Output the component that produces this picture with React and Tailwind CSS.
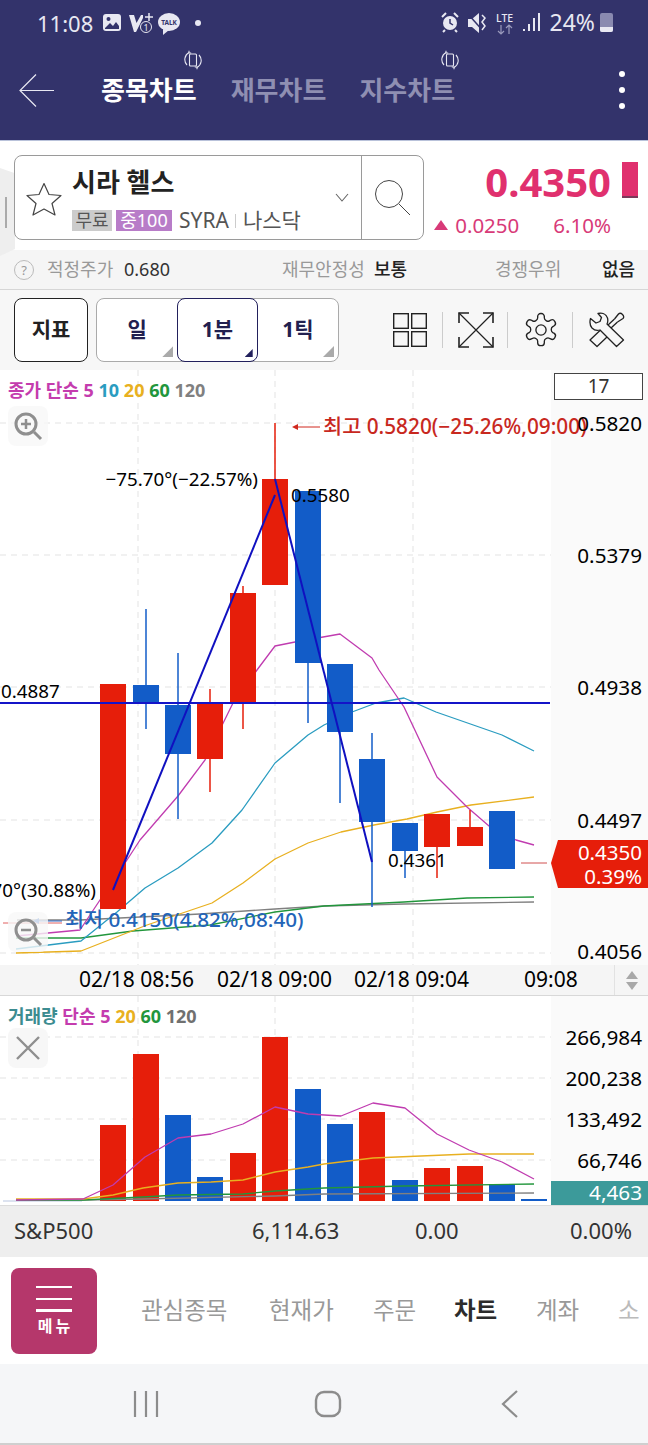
import React from 'react';

const BLUE = '#125cc8';
const RED = '#e61e0a';

// x = left edge, top/bottom = body, hi/lo = wick
const candles = [
  { x: 100, top: 684, bottom: 909, color: RED },
  { x: 133, top: 685, bottom: 702, hi: 609, lo: 729, color: BLUE },
  { x: 165, top: 705, bottom: 754, hi: 653, lo: 819, color: BLUE },
  { x: 197, top: 703, bottom: 759, hi: 689, lo: 792, color: RED },
  { x: 230, top: 593, bottom: 702, hi: 586, lo: 729, color: RED },
  { x: 262, top: 479, bottom: 585, hi: 423, lo: 479, color: RED },
  { x: 295, top: 491, bottom: 663, hi: 491, lo: 723, color: BLUE },
  { x: 327, top: 664, bottom: 732, hi: 664, lo: 803, color: BLUE },
  { x: 359, top: 759, bottom: 822, hi: 733, lo: 907, color: BLUE },
  { x: 392, top: 823, bottom: 851, hi: 823, lo: 878, color: BLUE },
  { x: 424, top: 814, bottom: 847, hi: 814, lo: 878, color: RED },
  { x: 457, top: 827, bottom: 846, hi: 810, lo: 846, color: RED },
  { x: 489, top: 811, bottom: 869, hi: 811, lo: 869, color: BLUE },
];

const volumes = [
  { x: 100, top: 1125, color: RED },
  { x: 133, top: 1054, color: RED },
  { x: 165, top: 1115, color: BLUE },
  { x: 197, top: 1177, color: BLUE },
  { x: 230, top: 1153, color: RED },
  { x: 262, top: 1037, color: RED },
  { x: 295, top: 1089, color: BLUE },
  { x: 327, top: 1124, color: BLUE },
  { x: 359, top: 1112, color: RED },
  { x: 392, top: 1180, color: BLUE },
  { x: 424, top: 1168, color: RED },
  { x: 457, top: 1166, color: RED },
  { x: 489, top: 1184, color: BLUE },
  { x: 521, top: 1199, color: BLUE },
];

const priceLines = [
  { color: '#808080', points: '17,920 80,920 200,914 275,909 324,906 404,904 534,902' },
  { color: '#22963c', points: '16,938 81,938 133,931 210,925 275,912 324,906 404,902 467,898 534,897' },
  { color: '#e8b020', points: '16,953 81,951 147,925 212,903 243,883 275,859 308,843 341,832 374,825 407,819 437,812 471,805 534,797' },
  { color: '#2a9cc0', points: '16,949 81,941 117,912 145,888 178,868 212,843 242,810 275,763 308,735 324,725 352,712 376,703 404,698 436,712 502,735 534,751' },
  { color: '#c03cb0', points: '16,936 80,930 100,900 127,860 140,840 178,796 205,760 233,703 257,670 275,646 295,642 340,634 372,658 379,670 404,707 437,777 467,807 489,826 516,840 534,845' },
];

const volumeLines = [
  { color: '#808080', points: '16,1200 83,1200 143,1199 275,1196 324,1194 534,1193' },
  { color: '#22963c', points: '16,1200 83,1200 143,1197 178,1195 243,1194 275,1191 324,1188 404,1186 534,1184' },
  { color: '#e8b020', points: '16,1199 83,1199 113,1195 143,1188 178,1183 211,1182 243,1180 275,1172 308,1167 324,1164 373,1158 469,1154 534,1154' },
  { color: '#c03cb0', points: '16,1200 83,1199 113,1185 145,1157 178,1138 211,1134 243,1124 275,1107 308,1114 341,1116 373,1103 405,1108 437,1134 469,1150 502,1162 534,1179' },
];

const StatusIcons = () => (
  <svg width="150" height="28" viewBox="0 0 150 28" fill="none" className="ml-[9px]">
    {/* gallery */}
    <rect x="1" y="5" width="18" height="17" rx="3" fill="#e8e8f2" />
    <circle cx="6.5" cy="10" r="2" fill="#33336b" />
    <path d="M3 19 L8 14 L11 17 L14 13 L17 17 V20 H3 Z" fill="#33336b" />
    {/* vibrate off with count */}
    <path d="M27 6 H32 L34.5 14 L39 6 H41 V9 L34 23 H32 Z" fill="#e8e8f2" />
    <path d="M47 4 V12 M43 8 H51" stroke="#e8e8f2" strokeWidth="1.5" />
    <circle cx="44" cy="18" r="5.5" fill="#33336b" stroke="#e8e8f2" strokeWidth="1" />
    <text x="44" y="21.5" textAnchor="middle" fontSize="9" fill="#e8e8f2">1</text>
    {/* talk bubble */}
    <ellipse cx="67" cy="13" rx="11" ry="9" fill="#e8e8f2" />
    <path d="M61 20 L61 26 L67 21 Z" fill="#e8e8f2" />
    <text x="67" y="15.5" textAnchor="middle" fontSize="6.5" fontWeight="700" fill="#33336b">TALK</text>
    <circle cx="96" cy="14" r="3" fill="#e8e8f2" />
  </svg>
);

const StatusRight = () => (
  <svg width="101" height="28" viewBox="0 0 101 28" fill="none">
    {/* alarm */}
    <circle cx="9" cy="14" r="7" fill="#e8e8f2" />
    <path d="M9 10 V14 L12 16" stroke="#33336b" strokeWidth="1.5" />
    <path d="M1 8 L5 4 M17 8 L13 4 M4 21 L2 23 M14 21 L16 23" stroke="#e8e8f2" strokeWidth="2" />
    {/* mute */}
    <path d="M27 10 H31 L38 4 V24 L31 18 H27 Z" fill="#e8e8f2" />
    <path d="M27 5 L43 23" stroke="#33336b" strokeWidth="1.5" />
    <path d="M41 6 L44 9 L41 13 L44 17 L41 21" stroke="#e8e8f2" strokeWidth="1.5" />
    {/* lte */}
    <text x="55" y="13" fontSize="10.5" fontWeight="500" fill="#e8e8f2">LTE</text>
    <path d="M60 16 V25 M57 22 L60 25 L63 22" stroke="#9a9abc" strokeWidth="1.2" />
    <path d="M68 16 V25 M65 19 L68 16 L71 19" stroke="#9a9abc" strokeWidth="1.2" />
    {/* signal */}
    <path d="M83 22 V20 M88 22 V15 M93 22 V9 M98 22 V4" stroke="#e8e8f2" strokeWidth="2" />
  </svg>
);

const RotateIcon = () => (
  <svg width="18" height="20" viewBox="0 0 18 20" fill="none" stroke="#e8e8f2" strokeWidth="1.1">
    <rect x="5.5" y="4" width="7" height="12" rx="1" />
    <path d="M3 15 A8 8 0 0 1 5 2.5 M15 5 A8 8 0 0 1 13 17.5" />
    <path d="M5 0.8 V3 H7.2 M13 19.2 V17 H10.8" />
  </svg>
);

const CornerMark = ({ className = 'w-[11px] h-[11px] bg-[#aaaaaa]' }) => (
  <span className={`absolute right-[4px] bottom-[4px] [clip-path:polygon(100%_0,100%_100%,0_100%)] ${className}`} />
);

const ToolIcons = () => (
  <div className="flex items-center ml-[54px]">
    <svg width="34" height="34" viewBox="0 0 34 34" fill="none" stroke="#222" strokeWidth="1.4">
      <rect x="0.7" y="0.7" width="14.6" height="14.6" />
      <rect x="18.7" y="0.7" width="14.6" height="14.6" />
      <rect x="0.7" y="18.7" width="14.6" height="14.6" />
      <rect x="18.7" y="18.7" width="14.6" height="14.6" />
    </svg>
    <span className="w-px h-[36px] bg-[#cccccc] ml-[15px] mr-[15px]" />
    <svg width="36" height="36" viewBox="0 0 36 36" fill="none" stroke="#222" strokeWidth="1.2">
      <path d="M1 1 L35 35 M35 1 L1 35" />
      <path d="M1 11 V1 H11 M25 1 H35 V11 M35 25 V35 H25 M11 35 H1 V25" strokeWidth="1.6" />
    </svg>
    <span className="w-px h-[36px] bg-[#cccccc] ml-[13px] mr-[15px]" />
    <svg width="36" height="36" viewBox="0 0 24 24" fill="none" stroke="#222" strokeWidth="0.9" strokeLinejoin="round">
      <path d="M12.22 1h-.44a2 2 0 0 0-2 2v.9a2 2 0 0 1-1 1.73l-.43.25a2 2 0 0 1-2 0l-.75-.4a2 2 0 0 0-2.73.73l-.22.38a2 2 0 0 0 .73 2.73l.75.42a2 2 0 0 1 1 1.72v.51a2 2 0 0 1-1 1.74l-.75.42a2 2 0 0 0-.73 2.73l.22.38a2 2 0 0 0 2.73.73l.75-.4a2 2 0 0 1 2 0l.43.25a2 2 0 0 1 1 1.73v.9a2 2 0 0 0 2 2h.44a2 2 0 0 0 2-2v-.9a2 2 0 0 1 1-1.73l.43-.25a2 2 0 0 1 2 0l.75.4a2 2 0 0 0 2.73-.73l.22-.39a2 2 0 0 0-.73-2.73l-.75-.41a2 2 0 0 1-1-1.74v-.5a2 2 0 0 1 1-1.74l.75-.42a2 2 0 0 0 .73-2.73l-.22-.38a2 2 0 0 0-2.73-.73l-.75.4a2 2 0 0 1-2 0l-.43-.25a2 2 0 0 1-1-1.73V3a2 2 0 0 0-2-2z" />
      <circle cx="12" cy="12" r="3.4" />
    </svg>
    <span className="w-px h-[36px] bg-[#cccccc] ml-[13px] mr-[16px]" />
    <svg width="36" height="36" viewBox="0 0 36 36" fill="none" stroke="#222" strokeWidth="1.3" strokeLinejoin="round">
      {/* wrench */}
      <path d="M9 1.5 C13 0.5 17 2 18.5 6 C19 8 19 10 18 12 L34.5 28 L27.5 34.5 L11 18 C8 19 5 18 3 16 C1 13.5 0.5 10 1.5 6.5 L7 11 L11 9.5 L12.5 5.5 Z" />
      {/* screwdriver */}
      <path d="M11 18.5 L1 28 L8 34.5 L18 25" />
      <path d="M19 13 L25.5 7 M22 16 L28.5 10" />
      <path d="M25.5 7 L29.5 2 C30.5 1 32 1 33.5 2.5 C35 4 35 5.5 34 6.5 L28.5 10" />
    </svg>
  </div>
);

const ZoomButton = ({ plus, className }) => (
  <div className={`absolute left-[8px] w-[40px] h-[40px] rounded-lg bg-[#f7f7f7]/80 flex items-center justify-center ${className}`}>
    <svg width="30" height="30" viewBox="0 0 30 30" fill="none" stroke="#8f8f8f" strokeWidth="3">
      <circle cx="13" cy="13" r="10" />
      <path d="M21 21 L28 28" />
      <path d="M8 13 H18" strokeWidth="2.5" />
      {plus && <path d="M13 8 V18" strokeWidth="2.5" />}
    </svg>
  </div>
);

const PriceChart = () => (
  <div className="relative h-[595px] flex overflow-hidden bg-white">
    <div className="flex-1" />
    <div className="w-[97px] bg-[#fafafa]" />
    <svg className="absolute inset-0" width="648" height="595" viewBox="0 370 648 595" fill="none">
      {[423, 555, 687, 820, 953].map(y => (
        <path key={y} d={`M0 ${y} H551`} stroke="#e3e3e3" strokeDasharray="6 5" />
      ))}
      {[138, 275, 413].map(x => (
        <path key={x} d={`M${x} 370 V965`} stroke="#e3e3e3" strokeDasharray="6 5" />
      ))}
      {priceLines.map(l => (
        <polyline key={l.color} points={l.points} stroke={l.color} strokeWidth="1.3" strokeLinejoin="round" />
      ))}
      {candles.map(c => (
        <g key={c.x}>
          {c.hi && <path d={`M${c.x + 13} ${c.hi} V${c.lo}`} stroke={c.color} strokeWidth="1.5" />}
          <rect x={c.x} y={c.top} width="26" height={c.bottom - c.top} fill={c.color} />
        </g>
      ))}
      <path d="M521 863 H547" stroke="#d05050" />
      <path d="M0 703 H550" stroke="#1414c8" strokeWidth="2" />
      <path d="M113 890 L275 495" stroke="#1010c0" strokeWidth="2" />
      <path d="M275 479 L372 862" stroke="#1010c0" strokeWidth="2" />

      {/* low / high markers */}
      <path d="M3 923 H62" stroke="#e06060" />
      <path d="M38 921 H62" stroke="#2c66c4" />
      <path d="M33 921 L39 918 V924 Z" fill="#2c66c4" />
      <path d="M298 427 H320" stroke="#d0281e" />
      <path d="M292 427 L298 424 V430 Z" fill="#d0281e" />

      <text x="323" y="434" fontSize="20.8" fontWeight="500" fill="#c8281e">최고 0.5820(−25.26%,09:00)</text>
      <text x="65" y="927" fontSize="20.7" fontWeight="500" fill="#2264b8">최저 0.4150(4.82%,08:40)</text>
      <g fontSize="18.8" fill="#000">
        <text x="258" y="486" textAnchor="end">−75.70°(−22.57%)</text>
        <text x="291" y="502">0.5580</text>
        <text x="96" y="897" textAnchor="end">70°(30.88%)</text>
        <text x="1" y="698">0.4887</text>
        <text x="388" y="867">0.4361</text>
      </g>
      <g fontSize="20.7" fill="#000" textAnchor="end">
        <text x="642" y="431">0.5820</text>
        <text x="642" y="563">0.5379</text>
        <text x="642" y="695">0.4938</text>
        <text x="642" y="828">0.4497</text>
        <text x="642" y="959">0.4056</text>
      </g>
    </svg>
    <div className="absolute left-[551px] top-[470px] w-[97px] h-[48px] bg-[#e61e0a] [clip-path:polygon(7px_0,100%_0,100%_100%,7px_100%,0_48%)] flex flex-col items-end justify-center pr-[6px] text-[20.5px] leading-[24px] text-white">
      <span>0.4350</span>
      <span>0.39%</span>
    </div>
    <div className="absolute left-[8px] top-[10px] text-[18px] leading-5 font-bold whitespace-nowrap text-[#c43cae]">
      종가 단순 5 <span className="text-[#2a9cc0]">10</span> <span className="text-[#e8b020]">20</span>{' '}
      <span className="text-[#22963c]">60</span> <span className="text-[#808080]">120</span>
    </div>
    <div className="absolute left-[554px] top-[3px] w-[89px] h-[27px] border border-[#444] bg-white text-[19px] leading-[25px] text-center text-[#333]">
      17
    </div>
    <ZoomButton plus className="top-[36px]" />
    <ZoomButton className="top-[542px]" />
  </div>
);

const TimeAxis = () => (
  <div className="relative h-[31px] flex items-center bg-[#f5f5f5] border-b border-[#d8d8d8] text-[21px] text-black whitespace-nowrap">
    <span className="ml-[79px] w-[138px]">02/18 08:56</span>
    <span className="w-[137px]">02/18 09:00</span>
    <span className="w-[170px]">02/18 09:04</span>
    <span>09:08</span>
    <div className="absolute right-0 top-0 bottom-0 w-[34px] border-l border-[#e2e2e2] flex flex-col items-center justify-center gap-[3px]">
      <span className="w-0 h-0 border-x-[6px] border-x-transparent border-b-[8px] border-b-[#a8a8a8]" />
      <span className="w-0 h-0 border-x-[6px] border-x-transparent border-t-[8px] border-t-[#a8a8a8]" />
    </div>
  </div>
);

const VolumeChart = () => (
  <div className="relative h-[209px] flex overflow-hidden bg-white">
    <div className="flex-1" />
    <div className="w-[97px] bg-[#fafafa]" />
    <svg className="absolute inset-0" width="648" height="209" viewBox="0 996 648 209" fill="none">
      {[1037, 1078, 1119, 1160].map(y => (
        <path key={y} d={`M0 ${y} H551`} stroke="#e3e3e3" strokeDasharray="6 5" />
      ))}
      {[138, 275, 413].map(x => (
        <path key={x} d={`M${x} 996 V1205`} stroke="#e3e3e3" strokeDasharray="6 5" />
      ))}
      {volumes.map(v => (
        <rect key={v.x} x={v.x} y={v.top} width="26" height={1201 - v.top} fill={v.color} />
      ))}
      <path d="M3 1201 H82" stroke="#b9c6e0" />
      {volumeLines.map(l => (
        <polyline key={l.color} points={l.points} stroke={l.color} strokeWidth="1.3" strokeLinejoin="round" />
      ))}
      <g fontSize="20.7" fill="#000" textAnchor="end">
        <text x="642" y="1045">266,984</text>
        <text x="642" y="1086">200,238</text>
        <text x="642" y="1127">133,492</text>
        <text x="642" y="1168">66,746</text>
      </g>
      <rect x="551" y="1181" width="97" height="24" fill="#3c9a9a" />
      <text x="642" y="1200" fontSize="20.7" fill="#fff" textAnchor="end">4,463</text>
    </svg>
    <div className="absolute left-[8px] top-[10px] text-[18px] leading-5 font-bold whitespace-nowrap text-[#c43cae]">
      <span className="text-[#3c8c90]">거래량</span> 단순 5 <span className="text-[#e8b020]">20</span>{' '}
      <span className="text-[#22963c]">60</span> <span className="text-[#707070]">120</span>
    </div>
    <div className="absolute left-[8px] top-[32px] w-[40px] h-[40px] rounded-lg bg-[#f7f7f7] flex items-center justify-center">
      <svg width="26" height="26" viewBox="0 0 26 26" stroke="#8f8f8f" strokeWidth="2.4">
        <path d="M2 2 L24 24 M24 2 L2 24" />
      </svg>
    </div>
  </div>
);

const navItems = [
  { label: '관심종목', width: 'w-[128px]' },
  { label: '현재가', width: 'w-[104px]' },
  { label: '주문', width: 'w-[81px]' },
  { label: '차트', width: 'w-[82px]', active: true },
  { label: '계좌', width: 'w-[82px]' },
];

export default function App() {
  return (
    <div className="w-[648px] h-[1445px] flex flex-col overflow-hidden bg-white font-['Noto_Sans','Noto_Sans_CJK_KR',sans-serif]">
      {/* Header */}
      <div className="h-[141px] shrink-0 bg-[#33336b] border-b border-[#b9c2da] text-[#e8e8f2]">
        <div className="h-[45px] flex items-center pl-[37px] pr-[35px]">
          <span className="text-[22px] leading-none">11:08</span>
          <StatusIcons />
          <div className="ml-auto flex items-center">
            <StatusRight />
            <span className="text-[23px] leading-none ml-[8px]">24%</span>
            <span className="relative ml-[5px] w-[13px] h-[19px] rounded-[2px] bg-[#8a8ab0]">
              <span className="absolute left-0 right-0 bottom-0 h-[5px] rounded-b-[2px] bg-[#e8e8f2]" />
            </span>
          </div>
        </div>
        <div className="relative h-[90px] flex items-center">
          <svg className="ml-[19px]" width="35" height="33" viewBox="0 0 35 33" fill="none" stroke="#e8e8f2" strokeWidth="1.2">
            <path d="M35 16.5 H1 M17 0.5 L1 16.5 L17 32.5" />
          </svg>
          <span className="ml-[47px] text-[26px] leading-none font-bold text-white">종목차트</span>
          <span className="ml-[34px] text-[26px] leading-none font-bold text-[#8f8fb2]">재무차트</span>
          <span className="ml-[33px] text-[26px] leading-none font-bold text-[#8f8fb2]">지수차트</span>
          <span className="absolute left-[184px] top-[5px]"><RotateIcon /></span>
          <span className="absolute left-[441px] top-[5px]"><RotateIcon /></span>
          <div className="ml-auto mr-[23px] flex flex-col gap-[10px]">
            <span className="w-[6px] h-[6px] rounded-full bg-white" />
            <span className="w-[6px] h-[6px] rounded-full bg-white" />
            <span className="w-[6px] h-[6px] rounded-full bg-white" />
          </div>
        </div>
      </div>

      {/* Stock summary */}
      <div className="relative h-[109px] shrink-0 flex items-start pl-[14px] pt-[14px] bg-white">
        <div className="absolute left-0 top-[27px] w-[15px] h-[88px] bg-[#eeeeee] [clip-path:polygon(0_0,100%_6%,100%_92%,0_100%)] flex items-center pl-[5px]">
          <span className="w-[2px] h-[31px] bg-[#aaaaaa]" />
        </div>
        <div className="relative w-[410px] h-[85px] flex rounded-lg border border-[#9a9a9a] bg-white">
          <svg className="ml-[11px] mt-[26px]" width="36" height="34" viewBox="0 0 36 34" fill="none" stroke="#444" strokeWidth="1.2" strokeLinejoin="round">
            <path d="M18 1.5 L23 12.5 L35 13.5 L26 21.5 L29 33 L18 27 L7 33 L10 21.5 L1 13.5 L13 12.5 Z" />
          </svg>
          <div className="ml-[10px] flex flex-col">
            <span className="mt-[8px] text-[26px] leading-[36px] font-bold text-[#222] whitespace-nowrap">시라 헬스</span>
            <div className="mt-[10px] flex items-center text-[21px] leading-[21px] text-[#555] whitespace-nowrap">
              <span className="w-[40px] h-[21px] bg-[#cccccc] text-center text-[18px]">무료</span>
              <span className="ml-[4px] w-[56px] h-[21px] bg-[#b87cc8] text-center text-[18px] text-white">중100</span>
              <span className="ml-[7px]">SYRA</span>
              <span className="ml-[6px] w-px h-[14px] bg-[#cccccc]" />
              <span className="ml-[7px]">나스닥</span>
            </div>
          </div>
          <svg className="absolute left-[320px] top-[37px]" width="14" height="9" viewBox="0 0 14 9" fill="none" stroke="#666" strokeWidth="1.1">
            <path d="M1 1 L7 8 L13 1" />
          </svg>
          <div className="ml-auto w-[62px] border-l border-[#9a9a9a] flex items-center justify-center">
            <svg width="38" height="38" viewBox="0 0 38 38" fill="none" stroke="#444" strokeWidth="1">
              <circle cx="15" cy="15" r="13.5" />
              <path d="M25 25 L36 36" />
            </svg>
          </div>
        </div>
        <div className="flex-1 flex flex-col items-end pr-[10px] text-[#e0306e] whitespace-nowrap">
          <div className="flex items-start">
            <span className="text-[40px] leading-[56px] font-bold -mt-[1px]">0.4350</span>
            <span className="ml-[11px] mt-[7px] w-[16px] h-[36px] bg-[#e0306e] border-b-2 border-[#7a3a5a]" />
          </div>
          <div className="mt-[1px] flex items-center text-[20.5px] leading-[28px] text-[#d83a78] pr-[27px]">
            <span className="w-0 h-0 border-x-[7px] border-x-transparent border-b-[10px] border-b-[#d83a78]" />
            <span className="ml-[7px]">0.0250</span>
            <span className="ml-[34px]">6.10%</span>
          </div>
        </div>
      </div>

      {/* Valuation row */}
      <div className="h-[40px] shrink-0 flex items-center bg-[#f5f5f5] border-b border-[#d6d6d6] text-[18px] text-[#999] whitespace-nowrap">
        <span className="ml-[14px] w-[20px] h-[20px] rounded-full border border-[#bbb] text-[13px] leading-[18px] text-center">?</span>
        <span className="ml-[13px] w-[65px]">적정주가</span>
        <span className="ml-[12px] w-[47px] text-[#333]">0.680</span>
        <span className="ml-[111px] w-[82px]">재무안정성</span>
        <span className="ml-[10px] w-[33px] text-[#222] font-medium">보통</span>
        <span className="ml-[88px] w-[65px]">경쟁우위</span>
        <span className="ml-[42px] text-[#222] font-medium">없음</span>
      </div>

      {/* Toolbar */}
      <div className="h-[80px] shrink-0 flex items-center pl-[14px] bg-[#f7f7f7]">
        <div className="w-[74px] h-[64px] flex items-center justify-center rounded-lg border border-[#222] bg-white text-[21px] font-bold text-[#222]">
          지표
        </div>
        <div className="ml-[8px] w-[243px] h-[64px] flex rounded-lg border border-[#aaaaaa] bg-white text-[21px] font-bold text-[#22204f]">
          <div className="relative w-[81px] flex items-center justify-center">
            일
            <CornerMark />
          </div>
          <div className="relative w-[81px] -my-px flex items-center justify-center rounded-lg border-[1.5px] border-[#22205c]">
            1분
            <CornerMark className="w-[8px] h-[8px] bg-[#22205c]" />
          </div>
          <div className="relative w-[81px] flex items-center justify-center">
            1틱
            <CornerMark />
          </div>
        </div>
        <ToolIcons />
      </div>

      <PriceChart />
      <TimeAxis />
      <VolumeChart />

      {/* Index ticker */}
      <div className="h-[52px] shrink-0 flex items-center pb-[3px] bg-[#eeeeee] border-t border-[#dcdcdc] text-[22px] text-[#333] whitespace-nowrap">
        <span className="ml-[14px] w-[238px]">S&amp;P500</span>
        <span className="w-[163px]">6,114.63</span>
        <span className="w-[155px]">0.00</span>
        <span>0.00%</span>
      </div>

      {/* Bottom menu */}
      <div className="h-[107px] shrink-0 flex items-center bg-white overflow-hidden">
        <div className="ml-[11px] w-[86px] h-[86px] shrink-0 flex flex-col items-center rounded-lg bg-[#b5376b] text-white">
          <span className="mt-[18px] w-[36px] h-[2.5px] bg-white" />
          <span className="mt-[9.5px] w-[36px] h-[2.5px] bg-white" />
          <span className="mt-[9px] w-[36px] h-[2.5px] bg-white" />
          <span className="mt-[4px] text-[16px] leading-[20px] font-bold tracking-[3px] pl-[3px]">메뉴</span>
        </div>
        <div className="ml-[44px] flex items-center text-[23.5px] text-[#999] whitespace-nowrap">
          {navItems.map(item => (
            <span key={item.label} className={`${item.width} ${item.active ? 'font-bold text-[#2c2c2c]' : ''}`}>
              {item.label}
            </span>
          ))}
          <span className="text-[#bbb]">소</span>
        </div>
      </div>

      {/* Android nav */}
      <div className="flex-1 flex items-center bg-[#f5f6f8] border-b-2 border-[#cfcfcf]">
        <svg className="ml-[133px]" width="26" height="28" viewBox="0 0 26 28" stroke="#8c8c8c" strokeWidth="2.2">
          <path d="M2 1 V27 M13 1 V27 M24 1 V27" />
        </svg>
        <svg className="ml-[155px]" width="28" height="28" viewBox="0 0 28 28" fill="none" stroke="#8c8c8c" strokeWidth="2.4">
          <rect x="2" y="2" width="24" height="24" rx="8" />
        </svg>
        <svg className="ml-[159px]" width="18" height="28" viewBox="0 0 18 28" fill="none" stroke="#8c8c8c" strokeWidth="2.2">
          <path d="M16 1 L2 14 L16 27" />
        </svg>
      </div>
    </div>
  );
}
